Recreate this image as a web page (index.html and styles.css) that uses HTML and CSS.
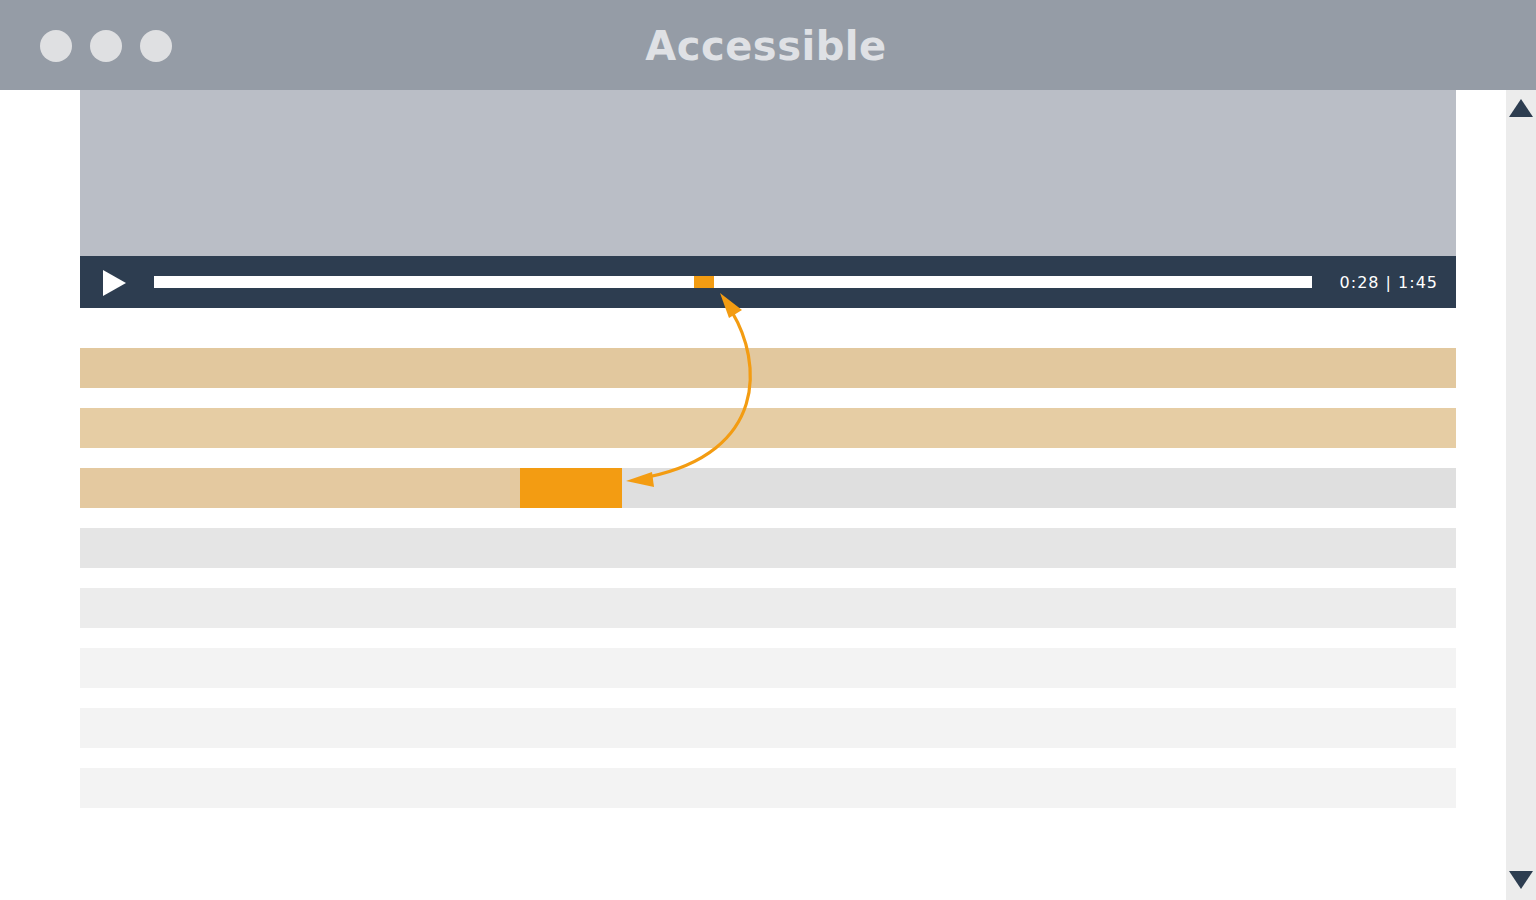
FILE: index.html
```html
<!DOCTYPE html>
<html lang="en">
<head>
<meta charset="utf-8">
<title>Accessible</title>
<link rel="stylesheet" href="styles.css">
</head>
<body>
<div class="window">
  <header class="titlebar">
    <div class="dots">
      <span class="dot"></span>
      <span class="dot"></span>
      <span class="dot"></span>
    </div>
    <h1 class="title">Accessible</h1>
  </header>
  <div class="main">
    <div class="content">
      <div class="player">
        <div class="screen"></div>
        <div class="controls">
          <span class="play"></span>
          <div class="track">
            <span class="thumb" style="left: 540px"></span>
          </div>
          <span class="time">0:28 | 1:45</span>
        </div>
      </div>
      <div class="rows">
        <div class="row row-t1"></div>
        <div class="row row-t2"></div>
        <div class="row row-mixed">
          <span class="seg seg-done" style="width: 440px"></span>
          <span class="seg seg-active" style="width: 102px"></span>
          <span class="seg seg-rest"></span>
        </div>
        <div class="row row-g1"></div>
        <div class="row row-g2"></div>
        <div class="row row-g3"></div>
        <div class="row row-g3"></div>
        <div class="row row-g3"></div>
      </div>
    </div>
    <aside class="scrollbar">
      <span class="arrow-up"></span>
      <span class="arrow-down"></span>
    </aside>
  </div>
  <svg class="link" width="1536" height="900" viewBox="0 0 1536 900" aria-hidden="true">
    <path d="M 732 312 C 762 362, 768 452, 648 477" fill="none" stroke="#f39c12" stroke-width="3.2" stroke-linecap="round"/>
    <polygon points="720,293 742,310 729,318" fill="#f39c12"/>
    <polygon points="626,481 652,472 654,487" fill="#f39c12"/>
  </svg>
</div>
</body>
</html>
```

FILE: styles.css
```css
* { box-sizing: border-box; }
html, body { margin: 0; padding: 0; background: #ffffff; }
body { font-family: "DejaVu Sans", "Liberation Sans", sans-serif; }

.window {
  position: relative;
  width: 1536px;
  height: 900px;
  overflow: hidden;
  display: flex;
  flex-direction: column;
}

.titlebar {
  position: relative;
  height: 90px;
  flex: none;
  background: #959ca6;
  display: flex;
  align-items: center;
  padding-left: 40px;
  padding-top: 2px;
}
.dots { display: flex; gap: 18px; }
.dot {
  width: 32px;
  height: 32px;
  border-radius: 50%;
  background: #dfe0e2;
}
.title {
  position: absolute;
  left: 0;
  right: 0;
  top: 1px;
  margin: 0;
  line-height: 90px;
  text-align: center;
  font-size: 40px;
  font-weight: bold;
  letter-spacing: 0.5px;
  color: #dfe1e5;
  padding-right: 4px;
}

.main {
  flex: 1;
  display: flex;
}
.content {
  flex: 1;
  padding-left: 80px;
  padding-right: 50px;
}
.player { width: 1376px; }
.screen { height: 166px; background: #babec6; }
.controls {
  height: 52px;
  background: #2d3d50;
  display: flex;
  align-items: center;
  padding-left: 23px;
  padding-right: 18px;
}
.play {
  width: 0;
  height: 0;
  border-top: 13.5px solid transparent;
  border-bottom: 13.5px solid transparent;
  border-left: 23px solid #ffffff;
  margin-top: 1px;
}
.track {
  position: relative;
  margin-left: 28px;
  width: 1158px;
  height: 12px;
  background: #ffffff;
}
.thumb {
  position: absolute;
  top: 0;
  width: 20px;
  height: 12px;
  background: #f39c12;
}
.time {
  margin-left: auto;
  color: #ffffff;
  font-size: 16px;
  letter-spacing: 1px;
  white-space: nowrap;
}

.rows {
  width: 1376px;
  margin-top: 40px;
  display: flex;
  flex-direction: column;
  gap: 20px;
}
.row { height: 40px; display: flex; }
.row-t1 { background: #e2c89e; }
.row-t2 { background: #e6cda4; }
.row-g1 { background: #e5e5e5; }
.row-g2 { background: #ececec; }
.row-g3 { background: #f3f3f3; }
.seg { display: block; height: 40px; flex: none; }
.seg-done { background: #e4c9a0; }
.seg-active { background: #f39c12; }
.seg-rest { flex: 1; background: #dfdfdf; }

.scrollbar {
  width: 30px;
  flex: none;
  background: #ececec;
  display: flex;
  flex-direction: column;
  justify-content: space-between;
  align-items: center;
  padding: 9px 0 11px;
}
.arrow-up {
  width: 0;
  height: 0;
  border-left: 12px solid transparent;
  border-right: 12px solid transparent;
  border-bottom: 18px solid #2d3d50;
}
.arrow-down {
  width: 0;
  height: 0;
  border-left: 12px solid transparent;
  border-right: 12px solid transparent;
  border-top: 18px solid #2d3d50;
}

.link {
  position: absolute;
  left: 0;
  top: 0;
  pointer-events: none;
}
```
